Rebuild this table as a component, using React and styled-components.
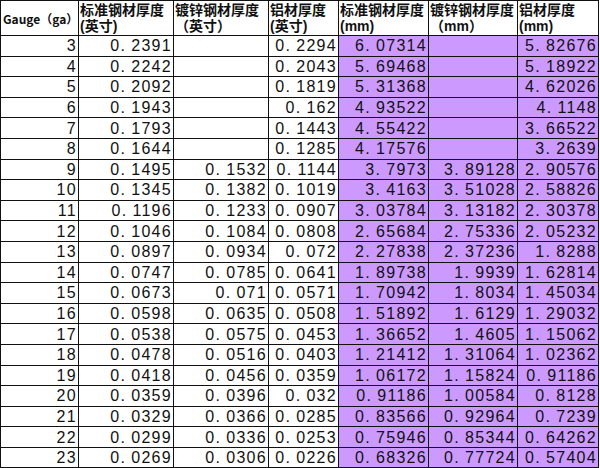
import React from "react";
import styled, { createGlobalStyle } from "styled-components";

const rows = [
  [3, "0.2391", "", "0.2294", "6.07314", "", "5.82676"],
  [4, "0.2242", "", "0.2043", "5.69468", "", "5.18922"],
  [5, "0.2092", "", "0.1819", "5.31368", "", "4.62026"],
  [6, "0.1943", "", "0.162", "4.93522", "", "4.1148"],
  [7, "0.1793", "", "0.1443", "4.55422", "", "3.66522"],
  [8, "0.1644", "", "0.1285", "4.17576", "", "3.2639"],
  [9, "0.1495", "0.1532", "0.1144", "3.7973", "3.89128", "2.90576"],
  [10, "0.1345", "0.1382", "0.1019", "3.4163", "3.51028", "2.58826"],
  [11, "0.1196", "0.1233", "0.0907", "3.03784", "3.13182", "2.30378"],
  [12, "0.1046", "0.1084", "0.0808", "2.65684", "2.75336", "2.05232"],
  [13, "0.0897", "0.0934", "0.072", "2.27838", "2.37236", "1.8288"],
  [14, "0.0747", "0.0785", "0.0641", "1.89738", "1.9939", "1.62814"],
  [15, "0.0673", "0.071", "0.0571", "1.70942", "1.8034", "1.45034"],
  [16, "0.0598", "0.0635", "0.0508", "1.51892", "1.6129", "1.29032"],
  [17, "0.0538", "0.0575", "0.0453", "1.36652", "1.4605", "1.15062"],
  [18, "0.0478", "0.0516", "0.0403", "1.21412", "1.31064", "1.02362"],
  [19, "0.0418", "0.0456", "0.0359", "1.06172", "1.15824", "0.91186"],
  [20, "0.0359", "0.0396", "0.032", "0.91186", "1.00584", "0.8128"],
  [21, "0.0329", "0.0366", "0.0285", "0.83566", "0.92964", "0.7239"],
  [22, "0.0299", "0.0336", "0.0253", "0.75946", "0.85344", "0.64262"],
  [23, "0.0269", "0.0306", "0.0226", "0.68326", "0.77724", "0.57404"],
];

const headers = [
  { top: "标准钢材厚度", unit: "(英寸)" },
  { top: "镀锌钢材厚度", unit: "（英寸）" },
  { top: "铝材厚度", unit: "(英寸)" },
  { top: "标准钢材厚度", unit: "(mm)" },
  { top: "镀锌钢材厚度", unit: "（mm）" },
  { top: "铝材厚度", unit: "(mm)" },
];

const Num = ({ value }) => {
  if (!value) return null;
  const [a, b] = value.split(".");
  return (
    <>
      {a}
      <Dot>.</Dot>
      {b}
    </>
  );
};

const App = () => {
  return (
    <>
      <Global />
      <Sheet>
        <GaugeHead>Gauge（ga）</GaugeHead>
        {headers.map((h, i) => (
          <Head key={i}>
            <Line>{h.top}</Line>
            <Line>{h.unit}</Line>
          </Head>
        ))}
        {rows.map((r) => (
          <React.Fragment key={r[0]}>
            <Cell>{r[0]}</Cell>
            {r.slice(1).map((v, j) => (
              <Cell key={j} $mm={j >= 3}>
                <Num value={v} />
              </Cell>
            ))}
          </React.Fragment>
        ))}
      </Sheet>
    </>
  );
};
export default App;

const Global = createGlobalStyle`
  html, body {
    margin: 0;
    padding: 0;
    background: #fff;
  }
`;

const Sheet = styled.div`
  display: grid;
  grid-template-columns: 78px 95px 95px 70px 90px 89px 81px;
  grid-template-rows: 35px repeat(21, 20.6px);
  width: 599px;
  box-sizing: border-box;
  border-left: 1px solid #111;
  border-top: 1px solid #111;
  font-family: "Liberation Sans", "Noto Sans CJK SC", sans-serif;
  color: #111;
`;

const Head = styled.div`
  display: flex;
  flex-direction: column;
  justify-content: center;
  padding: 0 1px;
  border-right: 1px solid #111;
  border-bottom: 1px solid #111;
  font-size: 14px;
  font-weight: 700;
  white-space: nowrap;
  background: #fff;
`;

const Line = styled.span`
  display: block;
  height: 16px;
  line-height: 16px;
`;

const GaugeHead = styled(Head)`
  font-family: "Noto Sans CJK SC", sans-serif;
  font-size: 12px;
  padding: 0 2px;
`;

const Cell = styled.div`
  display: flex;
  align-items: center;
  justify-content: flex-end;
  padding-right: 1px;
  border-right: 1px solid #111;
  border-bottom: 1px solid #111;
  background: ${(p) => (p.$mm ? "#cc99ff" : "#fff")};
  font-size: 16px;
  letter-spacing: 1.3px;
  line-height: 19px;
  white-space: nowrap;
`;

const Dot = styled.span`
  margin-right: 5px;
`;
